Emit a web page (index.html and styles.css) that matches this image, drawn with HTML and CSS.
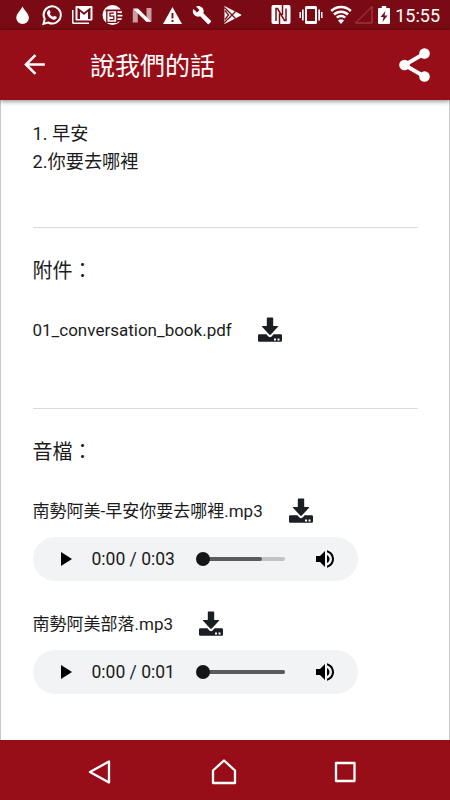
FILE: index.html
```html
<!DOCTYPE html>
<html lang="zh-Hant">
<head>
    <meta charset="UTF-8">
    <meta name="viewport" content="width=device-width, initial-scale=1.0">
    <title>說我們的話</title>
    <link rel="stylesheet" href="styles.css">
</head>
<body>
    <svg class="symbols" aria-hidden="true">
        <symbol id="download" viewBox="0 0 24 25">
            <path d="M9.500 .5h5q.7 0 .7.7V9h4.500q1 0 .3.8l-7.200 7.800q-.8.8-1.600 0L4 9.800Q3.300 9 4.300 9h4.500V1.200q0-.7.7-.7z"/>
            <path d="M1.200 17.300h7.200l2 2.200q1.600 1.500 3.200 0l2-2.200h7.200q1.200 0 1.200 1.200v5q0 1.200-1.200 1.200H1.200Q0 24.700 0 23.500v-5q0-1.200 1.200-1.200zM16 21.500v2h2v-2zm3.500 0v2h2v-2z" fill-rule="evenodd"/>
        </symbol>
        <symbol id="play" viewBox="0 0 24 24">
            <path d="M8 5v14l11-7z"/>
        </symbol>
        <symbol id="volume" viewBox="0 0 24 24">
            <path d="M3 9v6h4l5 5V4L7 9H3zm13.500 3c0-1.770-1.020-3.290-2.500-4.030v8.050c1.480-.73 2.500-2.250 2.500-4.020zM14 3.230v2.060c2.890.86 5 3.540 5 6.710s-2.110 5.850-5 6.710v2.060c4.010-.91 7-4.490 7-8.770s-2.990-7.860-7-8.770z"/>
        </symbol>
    </svg>

    <div class="status-bar">
        <div class="notifications">
            <svg viewBox="0 0 20 20"><path d="M10.500 1.500C9 5 4.300 8.500 4.300 13a6.300 6 0 0 0 12.600 0C16.900 8.500 12 5 10.500 1.500z"/></svg>
            <svg viewBox="0 0 20 20">
                <path class="line" d="M1.500 18.800l1.200-4.700A8.600 8.600 0 1 1 6.200 17.500z"/>
                <path d="M6.200 5.600c.7-.7 1.400-.6 1.700.1l.7 1.600c.2.5-.7 1.200-.9 1.500.7 1.400 1.900 2.500 3.400 3.200.4-.3 1-1.300 1.500-1.100l1.800.9c.5.300.300 1.100 0 1.700-.6 1.100-2.200 1.400-3.600.9-2.700-.9-4.600-2.800-5.600-5.200-.5-1.300-.1-2.700 1-3.600z"/>
            </svg>
            <svg viewBox="0 0 20 20">
                <path d="M0 5h1.500v12.500H17V19H1.500Q0 19 0 17.500z"/>
                <path d="M4.500 1h15q1 0 1 1v12.500q0 1-1 1h-15q-1 0-1-1V2q0-1 1-1zM5.500 3v11H8V6.500l4 3.500 4-3.500V14h2.500V3h-.8L12 7.500 6.300 3z" fill-rule="evenodd"/>
            </svg>
            <svg viewBox="0 0 20 20">
                <circle cx="10.500" cy="10" r="10"/>
                <path class="cut" d="M3.500 5.300h16M15 8.800h6M15 12.300h6M15 15.800h5"/>
                <path class="cut thin" d="M12 8.200H8v3h3.800v3.500H7.500M4.800 5.300v12h10v-12"/>
            </svg>
            <svg viewBox="0 0 20 20">
                <path class="dim" d="M.8 4.500h5v13h-5zM14.500 3h5v13.500h-5z"/>
                <path d="M1 3.500h5L19.300 16.800h-5z"/>
            </svg>
            <svg viewBox="0 0 20 20"><path d="M10.500 2L20 19H1zM9.500 8v5.500h1.900V8zm0 7v2h1.900v-2z" fill-rule="evenodd"/></svg>
            <svg viewBox="0 0 24 24"><path d="M22.700 19l-9.100-9.100c.9-2.300.4-5-1.500-6.900-2-2-5-2.400-7.400-1.300L9 6 6 9 1.600 4.700C.4 7.100.9 10.100 2.900 12.100c1.900 1.900 4.600 2.400 6.900 1.500l9.100 9.100c.4.4 1 .4 1.400 0l2.300-2.300c.5-.4.5-1.100.1-1.400z"/></svg>
            <svg viewBox="0 0 20 20">
                <path d="M2.500 1l16.500 8.500q1 .5 0 1L2.500 19z"/>
                <path class="cut thin" d="M2.500 2.500l11 11M2.500 17.500l11-11M3 5.500L6.500 10 3 14.500"/>
            </svg>
        </div>
        <div class="system">
            <svg class="nfc" viewBox="0 0 20 20">
                <path d="M2.300 0h15.400q1.800 0 1.800 1.800v15.400q0 1.800-1.800 1.800H2.300Q.5 19 .5 17.200V1.800Q.5 0 2.300 0z"/>
                <path class="cut" d="M5 16V3.500h1.500l7 12H15V3.500M8.500 8.500V19M11.500 0v10"/>
            </svg>
            <svg class="vibrate" viewBox="0 0 24 20">
                <path d="M7.500 1h9q1.500 0 1.500 1.500v15q0 1.500-1.500 1.500h-9Q6 19 6 17.500v-15Q6 1 7.500 1zM8 4v12h8V4zM3 4.500h1.700v11H3zM19.300 4.500H21v11h-1.700zM.5 7H2v6H.5zM22 7h1.500v6H22z" fill-rule="evenodd"/>
            </svg>
            <svg class="wifi" viewBox="0 0 22 20">
                <path class="line" d="M1.200 6a14 14 0 0 1 19.600 0M4 9.500a10 10 0 0 1 14 0M6.800 12.700a6 6 0 0 1 8.400 0"/>
                <path d="M8 15.500a4.500 4.500 0 0 1 6 0l-3 3.500z"/>
            </svg>
            <svg class="signal" viewBox="0 0 20 20"><path d="M1.500 18L18 1.500V18z"/></svg>
            <svg class="battery" viewBox="0 0 12 20"><path d="M3.800 1h4.400v2H11q1 0 1 1v14q0 1-1 1H1q-1 0-1-1V4q0-1 1-1h2.800zM7.500 6l-5 6h3l-1 5 5-6.500h-3z" fill-rule="evenodd"/></svg>
            <span class="clock">15:55</span>
        </div>
    </div>

    <header class="app-bar">
        <svg class="back" viewBox="0 0 24 24"><path d="M20 11H7.830l5.590-5.590L12 4l-8 8 8 8 1.410-1.410L7.830 13H20v-2z"/></svg>
        <h1>說我們的話</h1>
        <svg class="share" viewBox="0 0 32 34">
            <path d="M25.500 5.500l-20 11.500 20 11.500"/>
            <circle cx="25.500" cy="5.500" r="5.300"/>
            <circle cx="5.500" cy="17" r="5.300"/>
            <circle cx="25.500" cy="28.500" r="5.300"/>
        </svg>
    </header>

    <main class="content">
        <div class="lesson">
            <p>1. 早安</p>
            <p>2.你要去哪裡</p>
        </div>

        <section class="attachments">
            <h2>附件：</h2>
            <div class="file">
                <span>01_conversation_book.pdf</span>
                <svg><use href="#download"/></svg>
            </div>
        </section>

        <section class="recordings">
            <h2>音檔：</h2>
            <div class="file">
                <span>南勢阿美-早安你要去哪裡.mp3</span>
                <svg><use href="#download"/></svg>
            </div>
            <div class="player">
                <svg><use href="#play"/></svg>
                <span class="time">0:00 / 0:03</span>
                <div class="track"><div class="buffered" style="width: 73%"></div></div>
                <svg><use href="#volume"/></svg>
            </div>
            <div class="file">
                <span>南勢阿美部落.mp3</span>
                <svg><use href="#download"/></svg>
            </div>
            <div class="player">
                <svg><use href="#play"/></svg>
                <span class="time">0:00 / 0:01</span>
                <div class="track"><div class="buffered" style="width: 100%"></div></div>
                <svg><use href="#volume"/></svg>
            </div>
        </section>
    </main>

    <nav class="nav-bar">
        <svg viewBox="0 0 26 26"><path d="M22 2.500v21L3 13z"/></svg>
        <svg viewBox="0 0 26 26"><path d="M2 24V11.500L13 1.500l11 10V24z"/></svg>
        <svg viewBox="0 0 26 26"><path d="M4 4h18.500v18H4z"/></svg>
    </nav>
</body>
</html>
```

FILE: styles.css
```css
:root {
    --primary: #980e18;
    --primary-dark: #7a0b14;
    --text: #1c1c1c;
}

* {
    margin: 0;
    padding: 0;
    box-sizing: border-box;
}

body {
    height: 100vh;
    display: flex;
    flex-direction: column;
    overflow: hidden;
    background: #fff;
    color: var(--text);
    font-family: Roboto, "Noto Sans CJK TC", sans-serif;
}

svg {
    display: block;
    flex: none;
}

.symbols {
    display: none;
}

/* Status bar */
.status-bar {
    height: 30px;
    display: flex;
    justify-content: space-between;
    background: var(--primary-dark);
    padding: 0 10px 0 12px;
    fill: #fff;
}

.notifications,
.system {
    display: flex;
    align-items: center;
}

.notifications {
    gap: 10px;
}

.notifications svg {
    width: 20px;
    height: 20px;
    overflow: visible;
}

.line {
    fill: none;
    stroke: #fff;
    stroke-width: 2;
}

.wifi .line {
    stroke-width: 2.5;
}

.cut {
    fill: none;
    stroke: var(--primary-dark);
    stroke-width: 1.8;
}

.thin {
    stroke-width: 1.3;
}

.nfc .cut {
    stroke-width: 1.5;
}

.dim {
    opacity: .6;
}

.system svg {
    height: 20px;
}

.nfc {
    width: 20px;
    margin-right: 8px;
}

.vibrate {
    width: 24px;
    margin-right: 7px;
}

.wifi {
    width: 22px;
    margin-right: 2px;
}

.signal {
    width: 20px;
    margin-right: 4px;
    fill: none;
    stroke: #a94b52;
}

.battery {
    width: 12px;
    margin-right: 5px;
}

.clock {
    width: 45px;
    color: #fff;
    font-size: 18px;
    line-height: 31px;
    text-align: right;
}

/* App bar */
.app-bar {
    height: 70px;
    display: flex;
    align-items: center;
    padding: 0 19px;
    background: var(--primary);
    box-shadow: 0 1px 5px rgba(0, 0, 0, .5);
    color: #fff;
    fill: #fff;
    z-index: 1;
}

.back {
    width: 31px;
    height: 31px;
    margin-top: -1px;
}

.app-bar h1 {
    flex: 1;
    margin-left: 40px;
    padding-top: 3px;
    font-size: 25px;
    font-weight: 400;
    line-height: 36px;
}

.share {
    width: 32px;
    height: 34px;
}

.share path {
    fill: none;
    stroke: #fff;
    stroke-width: 3.8;
}

/* Content */
.content {
    flex: 1;
    padding: 20px 31.5px 0;
    border: solid #c8c8c8;
    border-width: 0 1px;
}

.lesson {
    height: 107px;
    font-size: 18.2px;
    line-height: 27.5px;
}

.attachments,
.recordings {
    border-top: 1px solid #dcdcdc;
    padding-top: 28px;
}

.attachments {
    height: 181px;
}

h2 {
    font-size: 20px;
    font-weight: 400;
    line-height: 30px;
    margin-bottom: 31px;
}

.file {
    height: 25px;
    display: flex;
    align-items: center;
    gap: 26px;
    font-size: 17px;
    line-height: 25px;
}

.file span {
    padding-top: 1px;
}

.file svg {
    width: 24px;
    height: 25px;
    fill: #1b1f23;
}

.player {
    width: 325px;
    height: 44px;
    display: flex;
    align-items: center;
    margin: 14px 0 30px;
    padding: 0 20px;
    border-radius: 22px;
    background: #f1f3f4;
}

.player svg {
    width: 24px;
    height: 24px;
}

.time {
    width: 111px;
    padding-left: 15px;
    font-size: 17.5px;
    white-space: nowrap;
}

.track {
    position: relative;
    width: 82px;
    height: 4px;
    margin: 0 28px 0 15px;
    border-radius: 2px;
    background: #c1c3c4;
}

/* Playhead */
.track::before {
    content: "";
    position: absolute;
    left: -7px;
    top: -5px;
    width: 14px;
    height: 14px;
    border-radius: 50%;
    background: #151515;
}

.buffered {
    height: 4px;
    border-radius: 2px;
    background: #5b5b5b;
}

/* Android navigation */
.nav-bar {
    height: 60px;
    display: flex;
    justify-content: space-between;
    padding: 19px 92px 0 87px;
    background: var(--primary);
    fill: none;
    stroke: #fff;
    stroke-width: 2.3;
    stroke-linejoin: round;
}

.nav-bar svg {
    width: 26px;
    height: 26px;
}

.nav-bar svg:nth-child(2) {
    margin-left: 3px;
}
```
